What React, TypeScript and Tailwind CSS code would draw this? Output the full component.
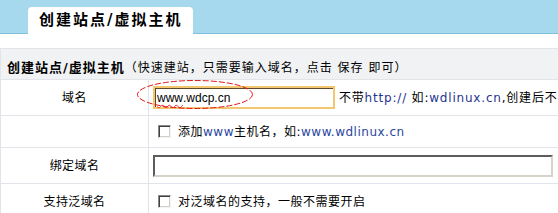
import React from "react";

const font = { fontFamily: '"DejaVu Sans", "Noto Sans CJK SC", sans-serif' };

function Checkbox() {
  return (
    <div className="w-[13px] h-[13px] shrink-0 bg-white border border-t-[#8a8a8a] border-l-[#8a8a8a] border-b-[#f4f4f4] border-r-[#f4f4f4] shadow-[inset_1px_1px_0_#404040,inset_-1px_-1px_0_#d4d0c8]" />
  );
}

export default function App() {
  return (
    <div
      className="relative w-[558px] h-[213px] overflow-hidden bg-white text-[12px] text-black"
      style={font}
    >
      {/* top bar with tab */}
      <div className="h-[34px] bg-[#a6d9ee] border-b border-[#7fc0de] flex items-end pl-[28px]">
        <div className="h-[27px] w-[165px] -mb-px bg-white rounded-t-[4px] flex items-center pl-[11px] text-[15px] font-bold tracking-[2px] leading-none">
          创建站点/虚拟主机
        </div>
      </div>

      {/* table */}
      <div className="mt-[14px] w-[640px] border-l border-t border-[#e1e4e9]">
        <div className="h-[31px] bg-[#f1f2f4] border-b border-[#e1e4e9] flex items-center pt-[8px] pl-[6px] whitespace-nowrap">
          <span className="font-bold text-[13px] tracking-[1px]">创建站点/虚拟主机</span>
          <span className="tracking-[1px]">（快速建站，只需要输入域名，点击 保存 即可）</span>
        </div>

        {/* row 1 */}
        <div className="h-[36px] flex border-b border-[#e1e4e9]">
          <div className="w-[148px] shrink-0 border-r border-[#e1e4e9] flex items-center justify-center tracking-[0.4px]">
            域名
          </div>
          <div className="flex items-center pl-[4px] whitespace-nowrap">
            <div className="w-[182px] h-[23px] border-2 border-[#f3c770] shadow-[inset_1px_1px_0_#5e4b2c] flex items-center pl-[2px] text-[12px]" style={{ fontFamily: '"Liberation Sans", Arial, sans-serif' }}>
              <span className="underline decoration-wavy decoration-[#e03030] decoration-1 underline-offset-2">www</span>
              <span>.wdcp.cn</span>
            </div>
            <span className="ml-[4px] tracking-[0.8px]">
              不带<span className="text-[#1f3590]">http://</span> 如:<span className="text-[#1f3590]">wdlinux.cn</span>,创建后不
            </span>
          </div>
        </div>

        {/* row 2 */}
        <div className="h-[32px] flex border-b border-[#e1e4e9]">
          <div className="w-[148px] shrink-0 border-r border-[#e1e4e9]" />
          <div className="flex items-center pl-[9px] whitespace-nowrap gap-[7px] tracking-[0.5px]">
            <Checkbox />
            <span>
              添加<span className="text-[#2a46a0]">www</span>主机名，如:<span className="text-[#2a46a0]">www.wdlinux.cn</span>
            </span>
          </div>
        </div>

        {/* row 3 */}
        <div className="h-[36px] flex border-b border-[#e1e4e9]">
          <div className="w-[148px] shrink-0 border-r border-[#e1e4e9] flex items-center justify-center tracking-[0.4px]">
            绑定域名
          </div>
          <div className="flex items-center pl-[4px]">
            <div className="w-[400px] h-[22px] bg-white border-2 border-t-[#5c5c5c] border-l-[#5c5c5c] border-b-[#d8d3c8] border-r-[#d8d3c8]" />
          </div>
        </div>

        {/* row 4 */}
        <div className="h-[36px] flex border-b border-[#e1e4e9]">
          <div className="w-[148px] shrink-0 border-r border-[#e1e4e9] flex items-center justify-center tracking-[0.4px]">
            支持泛域名
          </div>
          <div className="flex items-center pl-[9px] whitespace-nowrap gap-[7px] tracking-[0.5px]">
            <Checkbox />
            <span>对泛域名的支持，一般不需要开启</span>
          </div>
        </div>
      </div>

      {/* red annotation ellipse */}
      <svg className="absolute left-[136px] top-[79px]" width="118" height="31" viewBox="0 0 118 31">
        <ellipse cx="59" cy="15.5" rx="57.5" ry="14" fill="none" stroke="#e21818" strokeWidth="1" strokeDasharray="6 2" />
      </svg>
    </div>
  );
}
